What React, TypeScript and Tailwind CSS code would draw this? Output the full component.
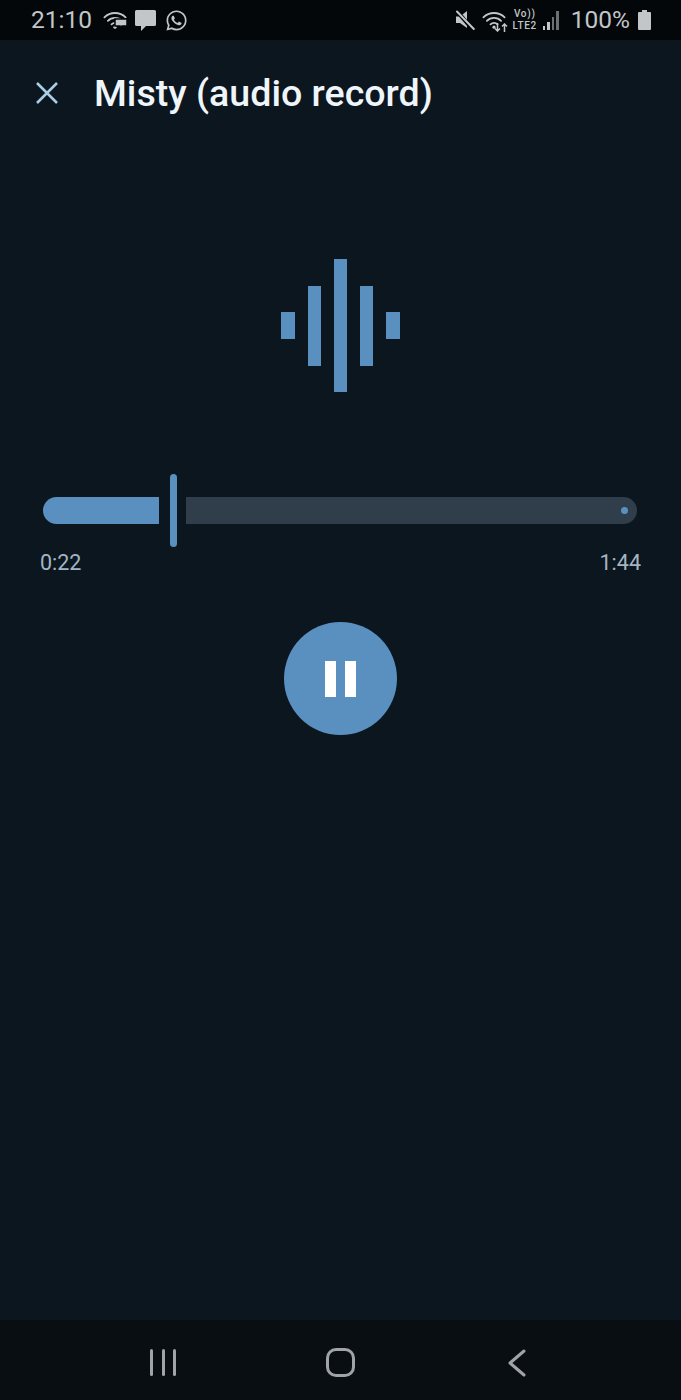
import { FaWhatsapp } from "react-icons/fa"

const roboto = "font-['Roboto',sans-serif]"

function WifiIcon({ className }: { className?: string }) {
  return (
    <svg viewBox="0 0 24 18" className={className} fill="none" stroke="#c2c6c8" strokeLinecap="round" strokeWidth="1.8">
      <path d="M1.4 6.4A15 15 0 0 1 22.6 6.4" />
      <path d="M4.9 9.9A10 10 0 0 1 19.1 9.9" />
      <path d="M8.5 13.4A5 5 0 0 1 15.5 13.4" />
      <circle cx="12" cy="16.2" r="1.6" fill="#c2c6c8" stroke="none" />
    </svg>
  )
}

function StatusBar() {
  return (
    <div className={`flex h-10 items-center justify-between bg-[#040709] pl-[31px] pr-[30px] text-[#c2c6c8] ${roboto}`}>
      <div className="flex items-center">
        <span className="text-[24.5px] leading-none">21:10</span>
        <div className="relative ml-[11px] h-[18px] w-6">
          <WifiIcon className="h-[18px] w-6" />
          <svg viewBox="0 0 14 12" className="absolute -bottom-[1px] -right-[1px] h-3 w-[14px]">
            <path d="M1 1h12v7H8l-2 3V8H1z" fill="#c2c6c8" stroke="#040709" strokeWidth="1.5" />
          </svg>
        </div>
        <svg viewBox="0 0 21 21" className="ml-[8px] h-[21px] w-[21px]">
          <path d="M1.5 0h18A1.5 1.5 0 0 1 21 1.5v13a1.5 1.5 0 0 1-1.5 1.5H11l-5 5v-5H1.5A1.5 1.5 0 0 1 0 14.5v-13A1.5 1.5 0 0 1 1.5 0z" fill="#c2c6c8" />
        </svg>
        <FaWhatsapp className="ml-[9px] text-[23px]" />
      </div>
      <div className="flex items-center">
        <svg viewBox="0 0 20 20" className="h-5 w-5">
          <path d="M1 6.5h4L12 1v17L5 13H1z" fill="#c2c6c8" />
          <path d="M1 0L19 21" stroke="#040709" strokeWidth="4" />
          <path d="M2 1.5L18.8 19" stroke="#c2c6c8" strokeWidth="2" strokeLinecap="round" />
        </svg>
        <div className="relative ml-[7px] h-[18px] w-6">
          <WifiIcon className="h-[18px] w-6" />
          <svg viewBox="0 0 14 9" className="absolute -bottom-[3px] -right-[2px] h-[9px] w-[14px]">
            <path d="M3.5 0v8M1 5.5L3.5 8 6 5.5M10.5 9V1M8 3.5L10.5 1 13 3.5" fill="none" stroke="#c2c6c8" strokeWidth="1.5" />
          </svg>
        </div>
        <div className="ml-[6px] flex w-[26px] flex-col items-center text-[10px] font-medium leading-[12px] tracking-[0.7px]">
          <span>Vo))</span>
          <span>LTE2</span>
        </div>
        <div className="ml-[5px] flex h-[19px] items-end gap-[2px]">
          <span className="h-[4px] w-[2.5px] bg-[#c2c6c8]" />
          <span className="h-[8px] w-[2.5px] bg-[#c2c6c8]" />
          <span className="h-[13px] w-[2.5px] bg-[#6b7073]" />
          <span className="h-[19px] w-[2.5px] bg-[#6b7073]" />
        </div>
        <span className="ml-[12px] text-[24.5px] leading-none">100%</span>
        <svg viewBox="0 0 13 20" className="ml-[8px] h-5 w-[13px]">
          <path d="M4 0h5v2h3a1 1 0 0 1 1 1v16a1 1 0 0 1-1 1H1a1 1 0 0 1-1-1V3a1 1 0 0 1 1-1h3z" fill="#c2c6c8" />
        </svg>
      </div>
    </div>
  )
}

function Waveform() {
  return (
    <div className="flex items-center justify-center gap-[13px]">
      <div className="h-[27px] w-[13.3px] bg-[#5990c0]" />
      <div className="h-[80px] w-[13.3px] bg-[#5990c0]" />
      <div className="h-[133px] w-[13.3px] bg-[#5990c0]" />
      <div className="h-[80px] w-[13.3px] bg-[#5990c0]" />
      <div className="h-[27px] w-[13.3px] bg-[#5990c0]" />
    </div>
  )
}

function SeekBar() {
  return (
    <div className="flex h-[73px] items-center pl-[43px] pr-[44px]">
      <div className="h-[27px] w-[116px] rounded-l-full rounded-r-[3px] bg-[#5990c0]" />
      <div className="ml-[11px] h-[73px] w-[7px] rounded-full bg-[#5990c0]" />
      <div className="ml-[9px] flex h-[27px] flex-1 items-center justify-end rounded-l-[3px] rounded-r-full bg-[#303d4a] pr-[9px]">
        <div className="h-[7px] w-[7px] rounded-full bg-[#5990c0]" />
      </div>
    </div>
  )
}

export default function App() {
  return (
    <div className={`flex h-[1400px] w-[681px] flex-col overflow-hidden bg-[#0c161e] ${roboto}`}>
      <StatusBar />

      <div className="flex h-[106px] items-center pl-[36px]">
        <svg viewBox="0 0 22 22" className="h-[22px] w-[22px]" fill="none" stroke="#a9cfe6" strokeWidth="2.5">
          <path d="M1 1l20 20M21 1L1 21" />
        </svg>
        <h1 className="ml-[36px] pt-[1px] text-[37.6px] font-medium leading-none text-[#eef5fb]">Misty (audio record)</h1>
      </div>

      <div className="mt-[113px]">
        <Waveform />
      </div>

      <div className="mt-[82px]">
        <SeekBar />
      </div>

      <div className="mt-[3px] flex justify-between px-[40px] text-[21.5px] leading-[26px] text-[#a3b5c4]">
        <span>0:22</span>
        <span>1:44</span>
      </div>

      <div className="mt-[46px] flex justify-center">
        <div className="flex h-[113px] w-[113px] items-center justify-center gap-[9px] rounded-full bg-[#5990c0]">
          <div className="h-[36px] w-[11px] bg-white" />
          <div className="h-[36px] w-[11px] bg-white" />
        </div>
      </div>

      <div className="mt-auto flex h-[80px] items-center bg-[#090e12] pt-[5px]">
        <div className="flex w-full items-center">
          <div className="ml-[150px] flex h-[27px] w-[26px] justify-between">
            <span className="w-[3px] rounded-full bg-[#a0a4a6]" />
            <span className="w-[3px] rounded-full bg-[#a0a4a6]" />
            <span className="w-[3px] rounded-full bg-[#a0a4a6]" />
          </div>
          <div className="ml-[150px] h-[29px] w-[29px] rounded-[10px] border-[3px] border-[#a0a4a6]" />
          <svg viewBox="0 0 18 28" className="ml-[153px] h-[28px] w-[18px]" fill="none" stroke="#a0a4a6" strokeWidth="3" strokeLinecap="round" strokeLinejoin="round">
            <path d="M16 2L2 14l14 12" />
          </svg>
        </div>
      </div>
    </div>
  )
}
